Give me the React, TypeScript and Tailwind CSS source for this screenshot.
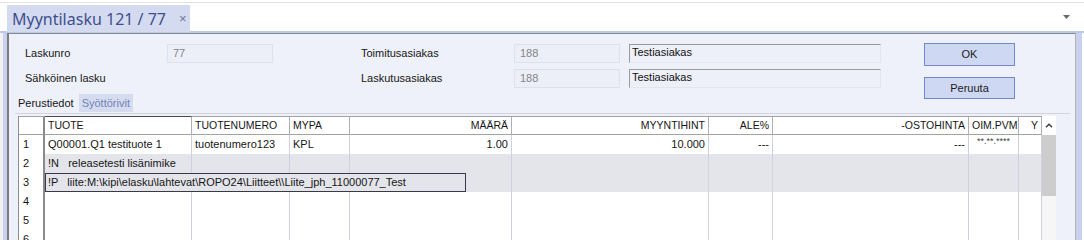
import React from "react";

const font = { fontFamily: '"Liberation Sans", Arial, sans-serif' };

type Row = { n: string; cells: string[]; gray?: boolean; editor?: string };

const rows: Row[] = [
  {
    n: "1",
    cells: ["Q00001.Q1 testituote 1", "tuotenumero123", "KPL", "1.00", "10.000", "---", "---", "**.**.****", ""],
  },
  { n: "2", cells: ["!N   releasetesti lisänimike", "", "", "", "", "", "", "", ""], gray: true },
  {
    n: "3",
    cells: ["", "", "", "", "", "", "", "", ""],
    gray: true,
    editor: "!P   liite:M:\\kipi\\elasku\\lahtevat\\ROPO24\\Liitteet\\\\Liite_jph_11000077_Test",
  },
  { n: "4", cells: ["", "", "", "", "", "", "", "", ""] },
  { n: "5", cells: ["", "", "", "", "", "", "", "", ""] },
  { n: "6", cells: ["", "", "", "", "", "", "", "", ""] },
];

const headers = ["TUOTE", "TUOTENUMERO", "MYPA", "MÄÄRÄ", "MYYNTIHINT", "ALE%", "-OSTOHINTA", "OIM.PVM", "Y"];
const align = ["left", "left", "left", "right", "right", "right", "right", "left", "right"];

function Field({ value, tone = "gray", className = "" }: { value: string; tone?: "gray" | "inset"; className?: string }) {
  if (tone === "inset") {
    return (
      <div
        className={`h-[19px] border-t border-l border-t-[#9a9a9a] border-l-[#9a9a9a] border-r border-b border-r-[#e3e6ee] border-b-[#e3e6ee] bg-[#edf0f8] pl-[2px] text-[11px] leading-[15px] text-[#111] ${className}`}
      >
        {value}
      </div>
    );
  }
  return (
    <div className={`h-[19px] border border-[#dde1eb] bg-[#eceff7] pl-[5px] text-[11px] leading-[17px] text-[#858585] ${className}`}>
      {value}
    </div>
  );
}

export default function App() {
  return (
    <div className="w-[1084px] h-[245px] overflow-hidden bg-white text-[#161616]" style={font}>
      {/* tab strip */}
      <div className="h-[2px]" />
      <div className="h-[29px] border-t border-[#e2e2e2] flex items-start">
        <div className="ml-[7px] mt-[2px] h-[27px] w-[183px] bg-[#d4dbf0] flex items-center pl-[5px]">
          <span className="text-[16px] text-[#3e4f8c]" style={{ fontFamily: '"Noto Sans", "Open Sans", sans-serif' }}>
            Myyntilasku 121 / 77
          </span>
          <span className="ml-[13px] text-[13px] text-[#6c7895]">×</span>
        </div>
        <div className="flex-1" />
        <svg width="8" height="5" viewBox="0 0 8 5" className="mt-[12px] mr-[13px]">
          <path d="M0 0 H7 L3.5 4 Z" fill="#6a6a6a" />
        </svg>
      </div>
      <div className="h-[2px] bg-[#bdc7e7]" />

      <div className="flex h-[207px]">
        <div className="w-[3px] bg-[#f2f2f2]" />
        <div className="w-[4px] bg-[#c9d1ee]" />
        <div className="w-[1069px] border-l-2 border-t border-r border-l-[#7c7c7c] border-t-[#8a8a8a] border-r-[#b5b5b5] bg-[#eef1f9] flex flex-col">
          {/* form */}
          <div className="flex">
            <div className="pl-[16px] pt-[10px]">
              <div className="flex items-center h-[19px]">
                <div className="w-[142px] text-[11px]">Laskunro</div>
                <Field value="77" className="w-[106px]" />
                <div className="w-[88px]" />
                <div className="w-[153px] text-[11px]">Toimitusasiakas</div>
                <Field value="188" className="w-[106px]" />
                <div className="w-[9px]" />
                <Field value="Testiasiakas" tone="inset" className="w-[252px]" />
              </div>
              <div className="flex items-center h-[19px] mt-[6px]">
                <div className="w-[142px] text-[11px]">Sähköinen lasku</div>
                <div className="w-[106px]" />
                <div className="w-[88px]" />
                <div className="w-[153px] text-[11px]">Laskutusasiakas</div>
                <Field value="188" className="w-[106px]" />
                <div className="w-[9px]" />
                <Field value="Testiasiakas" tone="inset" className="w-[252px]" />
              </div>
              <div className="ml-[-10px] mt-[6px] flex h-[18px] text-[11px]">
                <div className="px-[3px] leading-[18px]">Perustiedot</div>
                <div className="ml-[2px] px-[3px] leading-[18px] bg-[#d6dcef] text-[#7282b8]">Syöttörivit</div>
              </div>
            </div>
            <div className="ml-[43px] pt-[9px] flex flex-col gap-[11px]">
              <button className="w-[91px] h-[23px] border border-[#6e8acb] bg-[#cfd8f2] text-[11px] text-[#1a1a1a]">OK</button>
              <button className="w-[91px] h-[22px] border border-[#6e8acb] bg-[#cfd8f2] text-[11px] text-[#1a1a1a]">Peruuta</button>
            </div>
          </div>

          {/* grid */}
          <div className="ml-[6px] mr-[5px] mt-px border-t border-[#d2d5de] pt-[2px] pl-[3px]">
            <div className="flex h-[124px] overflow-hidden">
              <div className="w-[1024px] border-l border-[#8d8d8d] text-[11px]">
                <div className="grid grid-cols-[26px_147px_98px_60px_162px_197px_64px_196px_50px_23px] h-[19px] bg-white border-t border-[#a3a3a3] text-[10.5px]">
                  <div className="border-r-2 border-b border-r-[#8a8a8a] border-b-[#a3a3a3]" />
                  {headers.map((h, i) => (
                    <div
                      key={h}
                      className={`border-r border-b border-r-[#b0b0b0] border-b-[#a3a3a3] leading-[17px] px-[3px] whitespace-nowrap overflow-hidden ${
                        i === 0 ? "border-t border-t-[#4a4a4a] -mt-px" : ""
                      } ${align[i] === "right" ? "text-right" : "text-left"}`}
                    >
                      {h}
                    </div>
                  ))}
                </div>
                {rows.map((r) => (
                  <div
                    key={r.n}
                    className="relative grid grid-cols-[26px_147px_98px_60px_162px_197px_64px_196px_50px_23px] h-[19px]"
                  >
                    <div className="bg-white border-r-2 border-b border-r-[#8a8a8a] border-b-[#b4b4b4] pl-[4px] leading-[19px]">{r.n}</div>
                    {r.cells.map((c, i) => (
                      <div
                        key={i}
                        className={`border-r border-b border-r-[#cfd1e2] border-b-[#c9cbd3] px-[3px] whitespace-pre overflow-hidden ${
                          r.gray ? "bg-[#e4e5ea]" : "bg-white"
                        } ${align[i] === "right" ? "text-right" : i === 7 ? "text-center" : "text-left"} ${
                          i === 7 ? "text-[9px] leading-[12px] text-[#444]" : "leading-[18px]"
                        }`}
                      >
                        {c}
                      </div>
                    ))}
                    {r.editor && (
                      <div className="absolute left-[26px] top-0 h-[19px] w-[421px] border border-[#3a3a44] bg-[#e4e5ea] px-[2px] leading-[17px] whitespace-pre">
                        {r.editor}
                      </div>
                    )}
                  </div>
                ))}
              </div>
              <div className="w-[14px] flex flex-col">
                <div className="h-[19px] bg-white flex items-center justify-center">
                  <svg width="8" height="5" viewBox="0 0 8 5">
                    <path d="M1 4.2 L4 1.2 L7 4.2" stroke="#333" strokeWidth="1.3" fill="none" />
                  </svg>
                </div>
                <div className="h-[61px] bg-[#cdcdcd]" />
                <div className="flex-1 bg-[#f6f6f6]" />
              </div>
            </div>
          </div>
        </div>
        <div className="w-[6px] bg-[#c9d1ee]" />
      </div>
    </div>
  );
}
